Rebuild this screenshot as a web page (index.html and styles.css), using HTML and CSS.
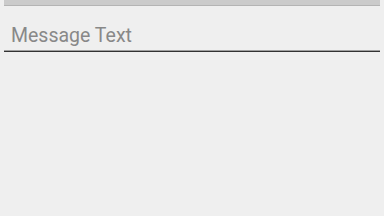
FILE: index.html
```html
<!DOCTYPE html>
<html lang="en">
<head>
  <meta charset="UTF-8">
  <meta name="viewport" content="width=device-width, initial-scale=1.0">
  <title>message</title>
  <link rel="stylesheet" href="styles.css">
</head>
<body>
  <div class="screen">
    <div class="topbar"></div>
    <div class="field">
      <input class="field__input" type="text" placeholder="Message Text">
    </div>
  </div>
</body>
</html>
```

FILE: styles.css
```css
html, body{
  margin: 0;
  height: 100%;
  background: #efefef;
  font-family: Roboto, "Liberation Sans", sans-serif;
}

.screen{
  height: 100%;
  padding: 0 4px;
  box-sizing: border-box;
}

.topbar{
  height: 5px;
  background: #cbcbcb;
  border-bottom: 1px solid #b4b4b4;
}

.field{
  margin-top: 17px;
  border-bottom: 1px solid #333;
  box-shadow: inset 0 -1px 0 #a0a0a0;
}

.field__input{
  display: block;
  width: 100%;
  box-sizing: border-box;
  border: 0;
  outline: 0;
  background: transparent;
  padding: 0 7px 4px;
  height: 28px;
  font-family: Roboto, "Liberation Sans", sans-serif;
  font-size: 19.5px;
  color: #333;
}

.field__input::placeholder{
  color: #888;
}
```
